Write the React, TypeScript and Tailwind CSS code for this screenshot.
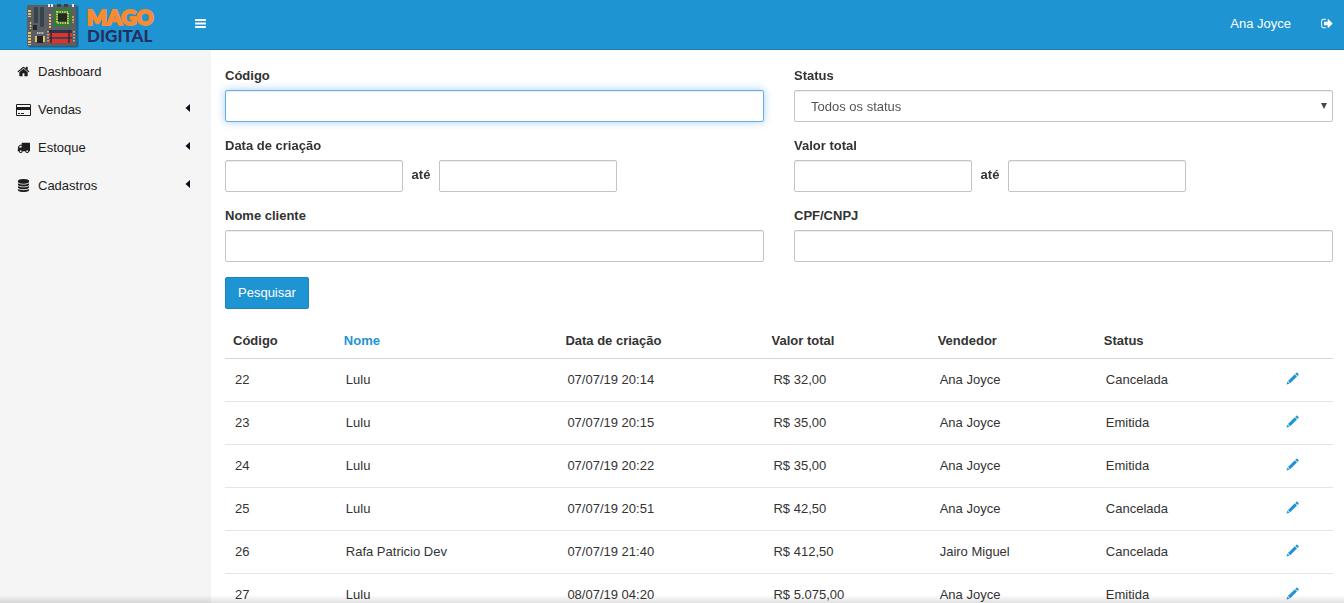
import React from "react";

type IconProps = { className?: string };

function Glyph({ d, box, className }: { d: string; box: string; className?: string }) {
  return (
    <svg viewBox={box} fill="currentColor" aria-hidden="true" className={className}>
      <path d={d} />
    </svg>
  );
}

const HOME =
  "M1472 992v480q0 26-19 45t-45 19h-384v-384h-256v384h-384q-26 0-45-19t-19-45v-480q0-1 .5-3t.5-3l575-474 575 474q1 2 1 6zm223-69l-62 74q-8 9-21 11h-3q-13 0-21-7l-692-577-692 577q-12 8-24 7-13-2-21-11l-62-74q-8-10-7-23.5t11-21.5l719-599q32-26 76-26t76 26l244 204v-195q0-14 9-23t23-9h192q14 0 23 9t9 23v408l219 182q10 8 11 21.5t-7 23.5z";
const CARD =
  "M1760 128q66 0 113 47t47 113v1216q0 66-47 113t-113 47h-1600q-66 0-113-47t-47-113v-1216q0-66 47-113t113-47h1600zm-1600 128q-13 0-22.5 9.5t-9.5 22.5v224h1664v-224q0-13-9.5-22.5t-22.5-9.5h-1600zm1600 1280q13 0 22.5-9.5t9.5-22.5v-608h-1664v608q0 13 9.5 22.5t22.5 9.5h1600zm-1504-128v-128h256v128h-256zm384 0v-128h384v128h-384z";
const TRUCK =
  "M640 1408q0-52-38-90t-90-38-90 38-38 90 38 90 90 38 90-38 38-90zm-384-512h384v-256h-158q-13 0-22 9l-195 195q-9 9-9 22v30zm1280 512q0-52-38-90t-90-38-90 38-38 90 38 90 90 38 90-38 38-90zm256-1088v1024q0 15-4 26.5t-13.5 18.5-16.5 11.5-23.5 6-22.5 2-25.5 0-22.5-.5q0 106-75 181t-181 75-181-75-75-181h-384q0 106-75 181t-181 75-181-75-75-181h-64q-3 0-22.5.5t-25.5 0-22.5-2-23.5-6-16.5-11.5-13.5-18.5-4-26.5q0-26 19-45t45-19v-320q0-8-.5-35t0-38 2.5-34.5 6.5-37 14-30.5 22.5-30l198-198q19-19 50.5-32t58.5-13h160v-192q0-26 19-45t45-19h1024q26 0 45 19t19 45z";
const DATABASE =
  "M896 768q237 0 443-43t325-127v170q0 69-103 128t-280 93.5-385 34.5-385-34.5-280-93.5-103-128v-170q119 84 325 127t443 43zm0 768q237 0 443-43t325-127v170q0 69-103 128t-280 93.5-385 34.5-385-34.5-280-93.5-103-128v-170q119 84 325 127t443 43zm0-384q237 0 443-43t325-127v170q0 69-103 128t-280 93.5-385 34.5-385-34.5-280-93.5-103-128v-170q119 84 325 127t443 43zm0-1152q208 0 385 34.5t280 93.5 103 128v128q0 69-103 128t-280 93.5-385 34.5-385-34.5-280-93.5-103-128v-128q0-69 103-128t280-93.5 385-34.5z";
const SIGN_OUT =
  "M704 1440q0 4 1 20t.5 26.5-3 23.5-10 19.5-20.5 6.5h-320q-119 0-203.5-84.5t-84.5-203.5v-704q0-119 84.5-203.5t203.5-84.5h320q13 0 22.5 9.5t9.5 22.5q0 4 1 20t.5 26.5-3 23.5-10 19.5-20.5 6.5h-320q-66 0-113 47t-47 113v704q0 66 47 113t113 47h312l11.5 1 11.5 3 8 5.5 7 9 2 13.5zm928-544q0 26-19 45l-544 544q-19 19-45 19t-45-19-19-45v-288h-448q-26 0-45-19t-19-45v-384q0-26 19-45t45-19h448v-288q0-26 19-45t45-19 45 19l544 544q19 19 19 45z";

function BarsIcon({ className }: IconProps) {
  return (
    <svg viewBox="0 0 11 9" fill="currentColor" aria-hidden="true" className={className}>
      <rect width="11" height="2" rx="0.4" />
      <rect y="3.5" width="11" height="2" rx="0.4" />
      <rect y="7" width="11" height="2" rx="0.4" />
    </svg>
  );
}

function PencilIcon({ className }: IconProps) {
  return (
    <svg viewBox="0 0 13 13" fill="currentColor" aria-hidden="true" className={className}>
      <path d="M10.3 .7a.7.7 0 0 1 1 0l1.2 1.2a.7.7 0 0 1 0 1l-1 1-2.2-2.2zM8.8 2.2 11 4.4 4.2 11.2 2 9zM1.5 9.6l2.1 2.1L.5 12.6z" />
    </svg>
  );
}

function BoardLogo({ className }: IconProps) {
  const gold = "#e3c06a";
  return (
    <svg viewBox="0 0 56 50" aria-hidden="true" className={className}>
      <rect x="4" y="6" width="50" height="42" rx="2" fill="#14567d" opacity="0.35" />
      <rect x="3" y="5" width="50" height="42" rx="2" fill="#14567d" opacity="0.6" />
      <rect x="2" y="5" width="49" height="41" rx="1" fill="#5b5e63" />
      <g fill="#dfe5e8">
        <rect x="23" y="4" width="2" height="3" />
        <rect x="26" y="4" width="2" height="3" />
        <rect x="47" y="4" width="2" height="3" />
      </g>
      <g fill="#34444f">
        <rect x="32" y="4" width="4" height="3" />
        <rect x="39" y="4" width="4" height="3" />
        <rect x="9" y="7" width="4" height="16" rx="1" />
        <rect x="15" y="7" width="4" height="20" rx="1" />
      </g>
      <rect x="8" y="25" width="4" height="5" fill="#292929" />
      <rect x="29" y="9" width="17" height="17" fill="#27832d" />
      <rect x="32" y="12" width="11" height="11" fill="none" stroke={gold} strokeWidth="2" strokeDasharray="1.4 1" />
      <rect x="33" y="13.5" width="9" height="8" fill="#242b25" />
      <g stroke={gold} strokeWidth="3" strokeDasharray="2 1">
        <path d="M4.5 10v7M4.5 32v13" />
        <path d="M25 14v14" strokeWidth="2" />
        <path d="M5.5 22v7M48 16v7" strokeWidth="1.5" />
      </g>
      <path d="M12 33h7" stroke="#dfe5e8" strokeWidth="1.5" strokeDasharray="1.4 .8" />
      <rect x="10" y="36" width="10" height="6" fill={gold} />
      <rect x="12" y="36" width="6" height="7" fill="#242424" />
      <path d="M23 31v12M49 31v12" stroke="#bca37d" strokeWidth="2" strokeDasharray="1.5 1.5" />
      <rect x="24" y="30" width="23" height="3" fill="#253a4c" />
      <rect x="24" y="33" width="23" height="4" fill="#e3302a" />
      <rect x="24" y="37" width="23" height="2" fill="#354854" />
      <rect x="24" y="39" width="23" height="4" fill="#e3302a" />
      <path d="M26 30v13M44 30v13" stroke="#292e33" strokeWidth="1.5" />
    </svg>
  );
}

const menu = [
  { label: "Dashboard", d: HOME, box: "0 0 1792 1792", size: "h-[13px] w-[13px]", open: false },
  { label: "Vendas", d: CARD, box: "0 0 1920 1792", size: "h-[14px] w-[15px]", open: true },
  { label: "Estoque", d: TRUCK, box: "0 0 1792 1792", size: "h-[13px] w-[13px]", open: true },
  { label: "Cadastros", d: DATABASE, box: "0 0 1792 1792", size: "h-[13px] w-[13px]", open: true },
];

const rows = [
  ["22", "Lulu", "07/07/19 20:14", "R$ 32,00", "Ana Joyce", "Cancelada"],
  ["23", "Lulu", "07/07/19 20:15", "R$ 35,00", "Ana Joyce", "Emitida"],
  ["24", "Lulu", "07/07/19 20:22", "R$ 35,00", "Ana Joyce", "Emitida"],
  ["25", "Lulu", "07/07/19 20:51", "R$ 42,50", "Ana Joyce", "Cancelada"],
  ["26", "Rafa Patricio Dev", "07/07/19 21:40", "R$ 412,50", "Jairo Miguel", "Cancelada"],
  ["27", "Lulu", "08/07/19 04:20", "R$ 5.075,00", "Ana Joyce", "Emitida"],
];

const control =
  "h-8 rounded-[2px] border border-[#c4c4c4] bg-white px-3 text-[13px] text-[#555] shadow-[inset_0_1px_1px_rgba(0,0,0,0.075)] outline-none focus:border-[#66afe9] focus:shadow-[inset_0_1px_1px_rgba(0,0,0,0.075),0_0_8px_rgba(102,175,233,0.6)]";

function Field({ id, label, children }: { id: string; label: string; children: React.ReactNode }) {
  return (
    <div>
      <label htmlFor={id} className="mb-[5px] block font-bold">
        {label}
      </label>
      {children}
    </div>
  );
}

function RangeField({ id, label }: { id: string; label: string }) {
  return (
    <Field id={id} label={label}>
      <div className="flex">
        <input id={id} type="text" className={`${control} w-[178px]`} />
        <label htmlFor={`${id}-ate`} className="w-9 pt-1.5 text-center font-bold">
          até
        </label>
        <input id={`${id}-ate`} type="text" className={`${control} w-[178px]`} />
      </div>
    </Field>
  );
}

export default function App() {
  return (
    <div className="flex h-screen flex-col overflow-hidden bg-white font-['Liberation_Sans',Arial,sans-serif] text-[13px] leading-[18px] text-[#333]">
      <header className="flex h-[50px] shrink-0 items-center border-b border-[#1a7fb8] bg-[#1f94d3] text-white">
        <a href="#inicio" className="flex h-[49px] w-[189px] items-center overflow-hidden pl-[25px]">
          <BoardLogo className="h-[50px] w-14 shrink-0" />
          <span className="flex flex-col pt-0.5 pl-1.5 font-['Lato',sans-serif] font-black">
            <span className="text-[21px] leading-[20px] text-[#f68b33] [-webkit-text-stroke:2px_#f68b33]">MAGO</span>
            <span className="text-[17px] leading-[18px] text-[#24305e]">DIGITAL</span>
          </span>
        </a>
        <button type="button" aria-label="Alternar menu" className="px-1.5 pt-2 pb-2.5">
          <BarsIcon className="h-[9px] w-[11px]" />
        </button>
        <div className="ml-auto flex items-center gap-[30px] pr-[11px] pb-0.5">
          <a href="#perfil">Ana Joyce</a>
          <a href="#sair" aria-label="Sair">
            <Glyph d={SIGN_OUT} box="64 0 1600 1792" className="h-[13px] w-3" />
          </a>
        </div>
      </header>

      <div className="flex min-h-0 flex-1">
        <nav className="w-[211px] shrink-0 bg-[#f5f5f5] pt-[3px] text-[#1c1c1c]">
          <ul>
            {menu.map((m) => (
              <li key={m.label}>
                <a href={`#${m.label.toLowerCase()}`} className="flex h-[38px] items-center gap-1.5 pr-[21px] pl-[15px]">
                  <span className="flex w-[17px] justify-center pb-px">
                    <Glyph d={m.d} box={m.box} className={m.size} />
                  </span>
                  <span>{m.label}</span>
                  {m.open && (
                    <svg viewBox="0 0 5 8" aria-hidden="true" className="mb-1 ml-auto h-2 w-[5px]">
                      <path d="M5 0v8L0.5 4z" fill="#0c0c1c" />
                    </svg>
                  )}
                </a>
              </li>
            ))}
          </ul>
        </nav>

        <main className="min-w-0 flex-1 overflow-y-auto pt-[17px] pr-[11px] pl-3.5 [scrollbar-width:none]">
          <form onSubmit={(e) => e.preventDefault()}>
            <div className="grid grid-cols-2 gap-x-[30px] gap-y-[15px]">
              <Field id="codigo" label="Código">
                <input id="codigo" type="text" autoFocus className={`${control} w-full caret-transparent`} />
              </Field>
              <Field id="status" label="Status">
                <div className="relative">
                  <select id="status" className={`${control} w-full appearance-none pt-0.5 pl-4`}>
                    <option>Todos os status</option>
                  </select>
                  <svg viewBox="0 0 6 6" aria-hidden="true" className="pointer-events-none absolute top-[13px] right-1.5 h-1.5 w-1.5">
                    <path d="M0 0h6L3 6z" fill="#484848" />
                  </svg>
                </div>
              </Field>
              <RangeField id="data" label="Data de criação" />
              <RangeField id="valor" label="Valor total" />
              <Field id="nome" label="Nome cliente">
                <input id="nome" type="text" className={`${control} w-full`} />
              </Field>
              <Field id="cpf" label="CPF/CNPJ">
                <input id="cpf" type="text" className={`${control} w-full`} />
              </Field>
            </div>
            <button
              type="submit"
              className="mt-[15px] block h-8 rounded-[2px] border border-[#1b84bd] bg-[#1f94d3] px-3 text-white"
            >
              Pesquisar
            </button>
          </form>

          <table className="mt-[15px] w-full table-fixed border-collapse text-left">
            <colgroup>
              <col className="w-[10%]" />
              <col className="w-[20%]" />
              <col className="w-[18.6%]" />
              <col className="w-[15%]" />
              <col className="w-[15%]" />
              <col className="w-[16.3%]" />
              <col />
            </colgroup>
            <thead>
              <tr className="h-[34px] border-b border-[#d8d8d8]">
                <th className="px-2">Código</th>
                <th className="px-2">
                  <a href="#nome" className="text-[#1f94d3]">
                    Nome
                  </a>
                </th>
                <th className="px-2">Data de criação</th>
                <th className="px-2">Valor total</th>
                <th className="px-2">Vendedor</th>
                <th className="px-2">Status</th>
                <th aria-label="Ações" />
              </tr>
            </thead>
            <tbody>
              {rows.map((r) => (
                <tr key={r[0]} className="h-[43px] border-b border-[#e5e5e5]">
                  {r.map((c, i) => (
                    <td key={i} className="px-2.5">
                      {c}
                    </td>
                  ))}
                  <td className="px-2.5">
                    <a href={`#editar-${r[0]}`} aria-label={`Editar ${r[0]}`} className="flex pb-0.5 text-[#1f94d3]">
                      <PencilIcon className="h-[13px] w-[13px]" />
                    </a>
                  </td>
                </tr>
              ))}
            </tbody>
          </table>
        </main>
      </div>
      <div className="pointer-events-none fixed inset-x-0 bottom-0 h-2 bg-linear-to-b from-transparent to-black/12" />
    </div>
  );
}
